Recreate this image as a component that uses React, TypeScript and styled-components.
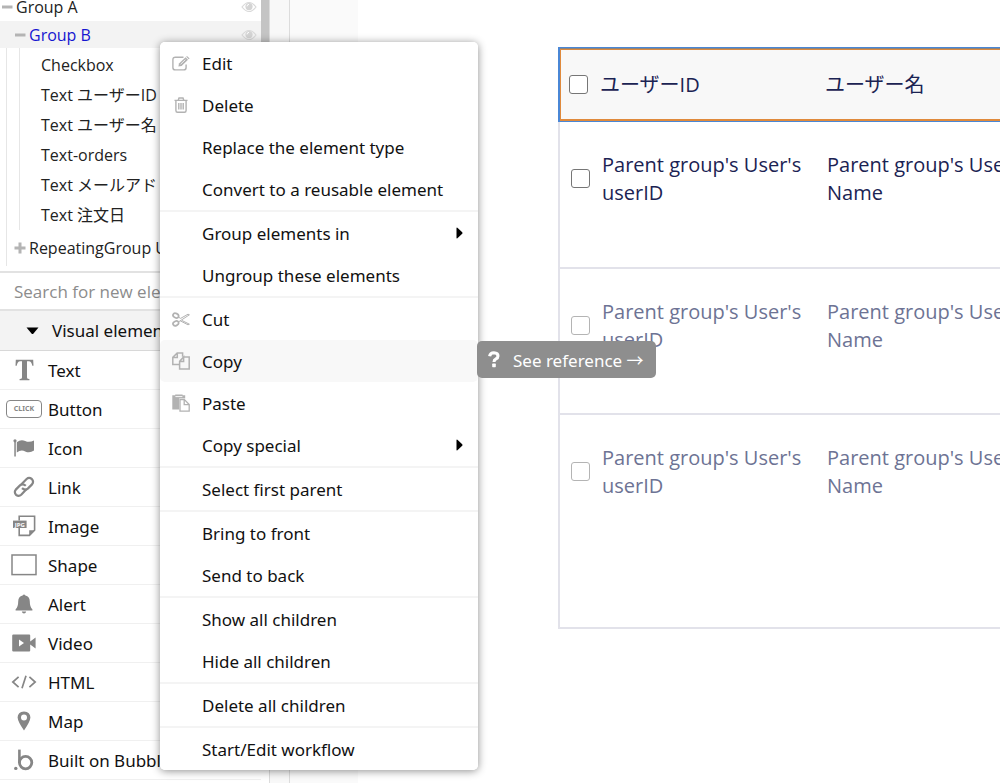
import React, { ReactNode, useState } from "react";
import styled, { createGlobalStyle, css } from "styled-components";

const GlobalStyle = createGlobalStyle`
  *, *::before, *::after { box-sizing: border-box; }
  body {
    margin: 0;
    background: #fff;
    color: #111;
    font-family: "Open Sans", "Noto Sans CJK JP", sans-serif;
  }
  button, input { font: inherit; color: inherit; }
  ul { list-style: none; margin: 0; padding: 0; }
`;

const uiFont = `"Noto Sans", "Open Sans", "Noto Sans CJK JP", sans-serif`;

const Editor = styled.div`
  display: grid;
  grid-template-columns: 270px 20px 68px minmax(0, 1fr);
  height: 100vh;
  overflow: hidden;
  position: relative;
`;

const Sidebar = styled.aside`
  display: flex;
  flex-direction: column;
  min-width: 0;
  overflow: hidden;
  border-right: 1px solid #dcdcdc;
`;

const TreePanel = styled.div`
  display: flex;
  flex: none;
  overflow: hidden;
  border-bottom: 2px solid #e2e2e2;
`;

const Tree = styled.ul`
  flex: 1;
  min-width: 0;
  margin-top: -8px;
  padding-bottom: 5px;
`;

const ScrollThumb = styled.div`
  width: 8px;
  background: #c4c4c4;
`;

const Branch = styled.ul<{ $inset: number; $gap?: number }>`
  position: relative;
  padding-top: ${(p) => p.$gap ?? 0}px;
  &::before {
    content: "";
    position: absolute;
    top: 0;
    bottom: 0;
    left: ${(p) => p.$inset}px;
    width: 1px;
    background: #e6e6e6;
  }
`;

const TreeRow = styled.div<{ $depth: number; $h: number; $active?: boolean }>`
  position: relative;
  display: flex;
  align-items: center;
  gap: 3px;
  height: ${(p) => p.$h}px;
  padding: 0 4px 0 ${(p) => p.$depth}px;
  font-size: 16px;
  line-height: 22px;
  white-space: nowrap;
  color: ${(p) => (p.$active ? "#1616d0" : "#222")};
  background: ${(p) => (p.$active ? "#f3f3f3" : "transparent")};
  svg { flex: none; }
`;

const EyeSlot = styled.span`
  display: flex;
  margin-left: auto;
`;

const SearchBox = styled.input`
  flex: none;
  height: 38px;
  width: 100%;
  border: 0;
  border-bottom: 2px solid #e2e2e2;
  border-radius: 0;
  padding: 0 14px;
  font-size: 17px;
  outline: none;
  background: #fff;
  &::placeholder { color: #8c8c8c; opacity: 1; }
`;

const SectionToggle = styled.button`
  flex: none;
  display: flex;
  align-items: center;
  gap: 13px;
  height: 40px;
  padding: 0 0 0 26px;
  border: 0;
  border-bottom: 1px solid #d8d8d8;
  background: #f3f3f3;
  font-family: ${uiFont};
  font-size: 17px;
  text-align: left;
  white-space: nowrap;
`;

const Palette = styled.ul`
  padding-right: 8px;
`;

const PaletteItem = styled.button`
  display: grid;
  grid-template-columns: 48px 1fr;
  align-items: center;
  width: 100%;
  height: 39px;
  padding: 0;
  border: 0;
  border-bottom: 1px solid #f0f0f0;
  background: #fff;
  font-family: ${uiFont};
  font-size: 17px;
  text-align: left;
  white-space: nowrap;
`;

const PaletteIcon = styled.span`
  display: flex;
  justify-content: center;
  color: #868686;
`;

const Gutter = styled.div`
  background: #f8f8f8;
  border-right: 1px solid #dcdcdc;
`;

const Margin = styled.div`
  background: #fafafa;
`;

const Canvas = styled.main`
  min-width: 0;
  overflow: hidden;
  padding: 47px 0 0 200px;
  color: #1b2353;
  font-size: 20px;
  line-height: 28px;
`;

const Table = styled.table`
  width: 616px;
  table-layout: fixed;
  border-collapse: separate;
  border-spacing: 0;
`;

const cellBase = css`
  padding: 0;
  text-align: left;
  font-weight: 400;
  white-space: nowrap;
`;

const HeadCell = styled.th<{ $first?: boolean }>`
  ${cellBase}
  height: 75px;
  background: #f8f8f8;
  border: 0 solid #4a87d6;
  border-width: 1px 0 1px ${(p) => (p.$first ? 2 : 0)}px;
  box-shadow: inset 0 1px #8a8580, inset 0 2px #e08a3c, inset 0 -2px #e08a3c
    ${(p) => (p.$first ? ", inset 1px 0 #e08a3c" : "")};
  padding-left: ${(p) => (p.$first ? 9 : 0)}px;
`;

const BodyRow = styled.tr<{ $h: number; $faded?: boolean }>`
  height: ${(p) => p.$h}px;
  color: ${(p) => (p.$faded ? "#6d7394" : "#1b2353")};
`;

const BodyCell = styled.td<{ $first?: boolean }>`
  ${cellBase}
  vertical-align: top;
  padding: 29px 0 0 ${(p) => (p.$first ? 11 : 2)}px;
  border-bottom: 2px solid #e2e2ea;
  border-left: ${(p) => (p.$first ? "2px solid #e2e2ea" : "0")};
`;

const Check = styled.input<{ $faded?: boolean; $drop?: boolean }>`
  appearance: none;
  display: block;
  width: 19px;
  height: 19px;
  margin: ${(p) => (p.$drop ? "18px" : "0")} 0 0;
  border: 1px solid ${(p) => (p.$faded ? "#b4b4b4" : "#767676")};
  border-radius: 3px;
  background: #fff;
`;

const Menu = styled.div`
  position: absolute;
  z-index: 2;
  top: 42px;
  left: 160px;
  width: 318px;
  background: #fff;
  border-radius: 5px;
  box-shadow: 0 1px 8px rgba(0, 0, 0, 0.45);
`;

const MenuGroup = styled.div`
  & + & { border-top: 2px solid #f4f4f4; }
`;

const MenuItem = styled.button<{ $active?: boolean }>`
  display: grid;
  grid-template-columns: 42px 1fr 22px;
  align-items: center;
  width: 100%;
  height: 42px;
  padding: 0;
  border: 0;
  border-radius: 5px;
  background: ${(p) => (p.$active ? "#f8f8f8" : "#fff")};
  font-family: ${uiFont};
  font-size: 17px;
  text-align: left;
  white-space: nowrap;
`;

const MenuIcon = styled.span`
  display: flex;
  justify-content: center;
  color: #b2b2b2;
`;

const Tooltip = styled.a`
  position: absolute;
  z-index: 3;
  top: 341px;
  left: 477px;
  display: flex;
  align-items: center;
  gap: 13px;
  height: 37px;
  padding: 0 12px 0 11px;
  border-radius: 5px;
  background: #8e8e8e;
  color: #fff;
  font-family: ${uiFont};
  font-size: 17px;
  text-decoration: none;
  white-space: nowrap;
`;

const Stroke = ({ w, h, box, sw = 2, children }: { w: number; h: number; box: string; sw?: number; children: ReactNode }) => (
  <svg width={w} height={h} viewBox={box} fill="none" stroke="currentColor" strokeWidth={sw} aria-hidden="true">
    {children}
  </svg>
);

const Eye = () => (
  <EyeSlot>
    <svg width="16" height="12" viewBox="0 0 16 12" aria-hidden="true">
      <path d="M1 6Q8-3 15 6Q8 15 1 6Z" fill="none" stroke="#d9d9d9" strokeWidth="1.2" />
      <circle cx="8" cy="5.6" r="3.6" fill="#d4d4d4" />
      <path d="M6 5.4A2 2 0 0 1 8 3.4" fill="none" stroke="#fff" />
    </svg>
  </EyeSlot>
);

const Minus = () => (
  <svg width="12" height="12" viewBox="0 0 12 12" aria-hidden="true">
    <path d="M1 6H11.5" stroke="#b4b4b4" strokeWidth="3" />
  </svg>
);

const Plus = () => (
  <svg width="12" height="12" viewBox="0 0 12 12" aria-hidden="true">
    <path d="M0.5 6H11.5M6 0.5V11.5" stroke="#b4b4b4" strokeWidth="3" />
  </svg>
);

const Caret = () => (
  <svg width="13" height="8" viewBox="0 0 13 8" aria-hidden="true">
    <path d="M0.5 0.5H12.5L7.5 6.6Q6.5 7.6 5.5 6.6Z" fill="#000" />
  </svg>
);

const SubArrow = () => (
  <svg width="7" height="12" viewBox="0 0 7 12" aria-hidden="true">
    <path d="M0.5 1V11Q0.6 11.8 1.4 11.2L6.2 6.8Q6.9 6 6.2 5.2L1.4 0.8Q0.6 0.2 0.5 1Z" fill="#000" />
  </svg>
);

const EditIcon = () => (
  <Stroke w={18} h={15} box="0 0 18 15" sw={1.4}>
    <path d="M11.5 1.2H3.4Q0.9 1.2 0.9 3.7V11.4Q0.9 13.9 3.4 13.9H11.6Q14.1 13.9 14.1 11.4V8.6" />
    <path d="M6.4 10.6L7 7.4L13.6 1.2L16 3.7L9.6 10.1Z" fill="currentColor" stroke="none" />
    <path d="M14.2 0.7L15 0L17.6 2.4L16.7 3.2Z" fill="currentColor" stroke="none" />
    <path d="M8.6 8.2L13.4 3.6" stroke="#fff" strokeWidth="0.8" />
  </Stroke>
);

const TrashIcon = () => (
  <Stroke w={14} h={16} box="0 0 14 16" sw={1.4}>
    <path d="M0.5 3.4H13.5M4.2 3.2L5 1H9L9.8 3.2M1.9 3.6V13.4Q1.9 15.2 3.5 15.2H10.5Q12.1 15.2 12.1 13.4V3.6M4.8 6V12.6M7 6V12.6M9.2 6V12.6" />
  </Stroke>
);

const CutIcon = () => (
  <Stroke w={18} h={15} box="0 0 18 15" sw={1.7}>
    <ellipse cx="3.8" cy="3.6" rx="2.9" ry="2.2" transform="rotate(25 3.8 3.6)" />
    <ellipse cx="3.8" cy="11.4" rx="2.9" ry="2.2" transform="rotate(-25 3.8 11.4)" />
    <path d="M6.3 5L8.6 6.4L16 2.2L17.4 2.8L9.2 8.2L6.3 10M9.8 8.4L17.4 12.2L16 12.8L8.2 8.8" strokeWidth="1" />
  </Stroke>
);

const CopyIcon = () => (
  <Stroke w={18} h={18} box="0 0 18 18" sw={1.5}>
    <path d="M7 12.4H0.8V5.4L5.2 0.9H10.6V4.8M5.3 1V5.5H0.9" />
    <path d="M11.6 5H17.2V17H7.6V9.4L11.6 5V9.4H7.7" />
  </Stroke>
);

const PasteIcon = () => (
  <Stroke w={18} h={18} box="0 0 18 18" sw={1.3}>
    <path d="M0.3 1.2H3.2V0.4H10.6V1.2H13.2V4.6H7.2V15.6H0.3Z" fill="currentColor" stroke="none" />
    <path d="M3.4 2.6H10.4" stroke="#fff" strokeWidth="0.9" />
    <path d="M8 5.6H12.4L17.2 10.6V17.2H8ZM12.2 5.8V10.7H17" fill="#fff" />
  </Stroke>
);

const HelpIcon = () => (
  <svg width="12" height="17" viewBox="0 0 12 17" fill="none" aria-hidden="true">
    <path d="M1.6 5.2Q2.2 1.7 5.9 1.7Q10 1.9 10 4.9Q10 6.8 8 7.8Q6 8.8 6 11" stroke="#fff" strokeWidth="3.1" />
    <rect x="4.2" y="12.6" width="3.6" height="3.6" rx="0.6" fill="#fff" />
  </svg>
);

const TextIcon = () => (
  <svg width="19" height="22" viewBox="0 0 19 22" fill="currentColor" aria-hidden="true">
    <path d="M0.8 0.8H18.2L18.5 6.8H17.3Q16.7 2.4 13.8 2.2H12V18.4Q12 20 14.4 20.1V21.3H4.6V20.1Q7 20 7 18.4V2.2H5.2Q2.3 2.4 1.7 6.8H0.5Z" />
  </svg>
);

const ClickBadge = styled.span`
  width: 36px;
  height: 18px;
  border: 1px solid #868686;
  border-radius: 4px;
  font-size: 7px;
  line-height: 16px;
  font-weight: 700;
  text-align: center;
`;

const FlagIcon = () => (
  <svg width="22" height="18" viewBox="0 0 22 18" fill="currentColor" aria-hidden="true">
    <circle cx="2" cy="1.8" r="1.6" />
    <path d="M1.3 2H2.8V17.6H1.3ZM3.8 3.2Q8-0.2 12.2 2Q16.4 4 21 1.4V11.6Q16.6 14.6 12.2 12.4Q8 10.4 3.8 13.4Z" />
  </svg>
);

const LinkIcon = () => (
  <Stroke w={22} h={22} box="0 0 22 22" sw={2.2}>
    <path d="M8.2 8.6L13.6 3Q16 0.9 18.8 3Q21.2 5.6 19 8.4L14.8 12.6Q12 14.8 9 12.2" />
    <path d="M13.4 13.2L8.2 18.8Q5.8 21 3 18.8Q0.8 16.2 2.8 13.6L7.2 9.2Q10 7.2 12.8 9.8" />
  </Stroke>
);

const ImageIcon = () => (
  <svg width="23" height="22" viewBox="0 0 23 22" fill="none" aria-hidden="true">
    <path d="M6.2 5.4V1.3H21.6V15.2L16.4 20.4H6.2V13" stroke="currentColor" strokeWidth="1.6" />
    <path d="M16.2 20.8V15.2H22Z" fill="currentColor" />
    <rect x="0" y="5.6" width="13.6" height="7.4" fill="currentColor" />
    <text x="6.8" y="11.6" textAnchor="middle" fontSize="6" fontWeight="700" fill="#fff" fontFamily="Open Sans">JPG</text>
  </svg>
);

const ShapeIcon = () => (
  <Stroke w={26} h={22} box="0 0 26 22" sw={1.5}>
    <rect x="1" y="1" width="24" height="19.6" />
  </Stroke>
);

const BellIcon = () => (
  <svg width="18" height="20" viewBox="0 0 18 20" fill="currentColor" aria-hidden="true">
    <path d="M7.6 1.4Q9-0.4 10.4 1.4Q14.8 2.6 14.8 7.4Q14.8 12.8 17.4 15.2V16.6H0.6V15.2Q3.2 12.8 3.2 7.4Q3.2 2.6 7.6 1.4ZM6.8 17.6H11.2Q10.8 19.6 9 19.6Q7.2 19.6 6.8 17.6Z" />
  </svg>
);

const VideoIcon = () => (
  <svg width="24" height="18" viewBox="0 0 24 18" aria-hidden="true">
    <path d="M1.4 0.4H17.2Q18.2 0.4 18.2 1.4V7.6L23.6 3.4V14.4L18.2 10.4V16.6Q18.2 17.6 17.2 17.6H1.4Q0.2 17.6 0.2 16.6V1.4Q0.2 0.4 1.4 0.4Z" fill="currentColor" />
    <path d="M7 5.6L12 9L7 12.4Z" fill="#fff" />
  </svg>
);

const CodeIcon = () => (
  <Stroke w={26} h={14} box="0 0 26 14" sw={1.7}>
    <path d="M7.6 1.8L1.8 7L7.6 12.2M18.4 1.8L24.2 7L18.4 12.2M15 0.8L11 13.2" />
  </Stroke>
);

const PinIcon = () => (
  <svg width="14" height="20" viewBox="0 0 14 20" fill="currentColor" fillRule="evenodd" aria-hidden="true">
    <path d="M7 0.4Q13.4 0.8 13.4 6.6Q13.2 10.6 7 19.6Q0.8 10.6 0.6 6.6Q0.6 0.8 7 0.4ZM7 3.4A3 3 0 1 0 7 9.4A3 3 0 1 0 7 3.4Z" />
  </svg>
);

const BubbleIcon = () => (
  <svg width="20" height="22" viewBox="0 0 20 22" fill="none" aria-hidden="true">
    <path d="M5.4 0.6V14" stroke="currentColor" strokeWidth="2.6" />
    <circle cx="11.6" cy="13.6" r="6.2" stroke="currentColor" strokeWidth="2.8" />
    <circle cx="1.8" cy="19.4" r="1.7" fill="currentColor" />
  </svg>
);

const leaves = ["Checkbox", "Text ユーザーID", "Text ユーザー名", "Text-orders", "Text メールアドレス", "Text 注文日"];

const palette: { label: string; icon: ReactNode }[] = [
  { label: "Text", icon: <TextIcon /> },
  { label: "Button", icon: <ClickBadge>CLICK</ClickBadge> },
  { label: "Icon", icon: <FlagIcon /> },
  { label: "Link", icon: <LinkIcon /> },
  { label: "Image", icon: <ImageIcon /> },
  { label: "Shape", icon: <ShapeIcon /> },
  { label: "Alert", icon: <BellIcon /> },
  { label: "Video", icon: <VideoIcon /> },
  { label: "HTML", icon: <CodeIcon /> },
  { label: "Map", icon: <PinIcon /> },
  { label: "Built on Bubble", icon: <BubbleIcon /> },
];

type Entry = { label: string; icon?: ReactNode; sub?: boolean };

const menu: Entry[][] = [
  [
    { label: "Edit", icon: <EditIcon /> },
    { label: "Delete", icon: <TrashIcon /> },
    { label: "Replace the element type" },
    { label: "Convert to a reusable element" },
  ],
  [{ label: "Group elements in", sub: true }, { label: "Ungroup these elements" }],
  [
    { label: "Cut", icon: <CutIcon /> },
    { label: "Copy", icon: <CopyIcon /> },
    { label: "Paste", icon: <PasteIcon /> },
    { label: "Copy special", sub: true },
  ],
  [{ label: "Select first parent" }],
  [{ label: "Bring to front" }, { label: "Send to back" }],
  [{ label: "Show all children" }, { label: "Hide all children" }],
  [{ label: "Delete all children" }],
  [{ label: "Start/Edit workflow" }],
];

const rows = [
  { h: 147, faded: false },
  { h: 146, faded: true },
  { h: 214, faded: true },
];

export default function App() {
  const [active, setActive] = useState("Copy");
  return (
    <Editor>
      <GlobalStyle />
      <Sidebar>
        <TreePanel>
          <Tree>
            <li>
              <TreeRow $depth={1} $h={29}>
                <Minus />Group A<Eye />
              </TreeRow>
              <Branch $inset={6}>
                <li>
                  <TreeRow $depth={14} $h={27} $active>
                    <Minus />Group B<Eye />
                  </TreeRow>
                  <Branch $inset={19} $gap={2}>
                    {leaves.map((l) => (
                      <li key={l}><TreeRow $depth={41} $h={30}>{l}</TreeRow></li>
                    ))}
                  </Branch>
                </li>
                <li>
                  <TreeRow $depth={14} $h={36}><Plus />RepeatingGroup User</TreeRow>
                </li>
              </Branch>
            </li>
          </Tree>
          <ScrollThumb />
        </TreePanel>
        <SearchBox type="search" aria-label="Search for new elements" placeholder="Search for new elements..." />
        <SectionToggle type="button" aria-expanded="true"><Caret />Visual elements</SectionToggle>
        <Palette>
          {palette.map((p) => (
            <li key={p.label}>
              <PaletteItem type="button"><PaletteIcon>{p.icon}</PaletteIcon>{p.label}</PaletteItem>
            </li>
          ))}
        </Palette>
      </Sidebar>
      <Gutter />
      <Margin />
      <Canvas>
        <Table>
          <colgroup>
            <col width="42" />
            <col width="225" />
            <col />
          </colgroup>
          <thead>
            <tr>
              <HeadCell $first><Check type="checkbox" aria-label="Select all" /></HeadCell>
              <HeadCell>ユーザーID</HeadCell>
              <HeadCell>ユーザー名</HeadCell>
            </tr>
          </thead>
          <tbody>
            {rows.map((r, i) => (
              <BodyRow key={i} $h={r.h} $faded={r.faded}>
                <BodyCell $first><Check type="checkbox" aria-label={`Select row ${i + 1}`} $faded={r.faded} $drop /></BodyCell>
                <BodyCell>Parent group's User's<br />userID</BodyCell>
                <BodyCell>Parent group's User's<br />Name</BodyCell>
              </BodyRow>
            ))}
          </tbody>
        </Table>
      </Canvas>
      <Menu role="menu">
        {menu.map((group, i) => (
          <MenuGroup key={i}>
            {group.map((m) => (
              <MenuItem key={m.label} type="button" role="menuitem" $active={active === m.label} onMouseEnter={() => setActive(m.label)}>
                <MenuIcon>{m.icon}</MenuIcon>
                {m.label}
                {m.sub && <SubArrow />}
              </MenuItem>
            ))}
          </MenuGroup>
        ))}
      </Menu>
      <Tooltip href="#reference"><HelpIcon />See reference →</Tooltip>
    </Editor>
  );
}
